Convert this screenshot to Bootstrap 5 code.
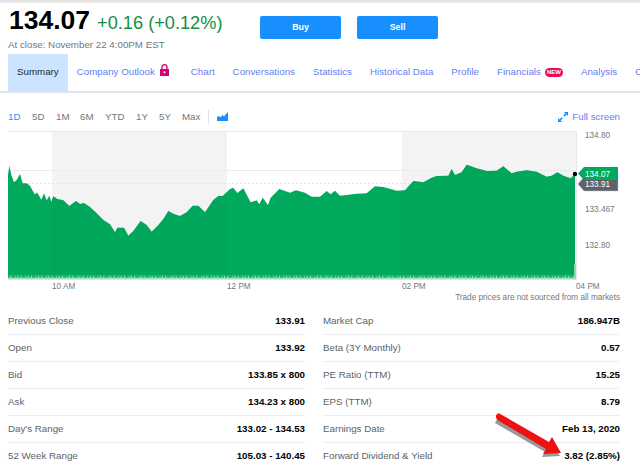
<!DOCTYPE html>
<html lang="en">
<head>
    <meta charset="UTF-8">
    <title>Stock Summary</title>
    <meta name="viewport" content="width=device-width, initial-scale=1">
    <link href="https://cdn.jsdelivr.net/npm/bootstrap@5.3.3/dist/css/bootstrap.min.css" rel="stylesheet">
    <style>
        html, body { height: 100%; }
        body {
            background: #fff;
            font-family: "Liberation Sans", Arial, sans-serif;
            font-size: 9.75px;
            overflow: hidden;
        }
        .page-wrap { width: 640px; height: 468px; overflow: hidden; position: relative; }
        .top-strip { height: 3px; background: linear-gradient(#dcdcdc, #f1f1f1); }
        .quote-head { height: 51px; padding-left: 9px; }
        .quote-left { width: 251px; }
        .price-line { line-height: 30px; margin-top: 2px; white-space: nowrap; }
        .price { font-size: 26.5px; font-weight: 700; color: #000; }
        .change { font-size: 18.2px; color: #109040; margin-left: 7px; }
        .close-note { font-size: 9.75px; line-height: 12px; margin-top: -2px; margin-left: -1px; color: #6f7880; }
        .trade-btn {
            width: 81px; height: 23px; margin-top: 13px; padding: 0;
            background: #188fff; border: 0; border-radius: 2px;
            color: #fff; font-size: 8.8px; font-weight: 700;
        }
        .tab-bar { height: 39px; padding-left: 8px; border-bottom: 2px solid #e0e4e9; white-space: nowrap; overflow: hidden; }
        .tab-item { height: 39px; padding: 0 9px; line-height: 36px; color: #5f80f5; flex: none; }
        .tab-item.active-tab { color: #26282a; background: #cce4ff; border-bottom: 2px solid #188fff; }
        .lock-icon { margin-left: 5px; vertical-align: -1px; }
        .new-pill {
            display: inline-block; margin-left: 4px; width: 18px; height: 9px;
            background: #ee0a5f; border-radius: 5px; color: #fff;
            font-size: 6px; font-weight: 700; line-height: 9px; text-align: center; vertical-align: 1px;
        }
        .range-bar { height: 32px; padding: 15px 20px 0 8px; font-size: 9.75px; color: #6f7880; }
        .range-item { line-height: 18px; }
        .range-on { color: #188fff; }
        .range-sep { width: 1px; height: 14px; background: #e0e4e9; margin: 2px 8px 0 0; }
        .full-link { color: #5f80f5; line-height: 18px; }
        .chart-svg { display: block; }
        .chart-svg text { font-family: "Liberation Sans", Arial, sans-serif; font-size: 8.2px; fill: #6f7880; }
        .chart-svg .tag-text { fill: #fff; }
        .stats-wrap { margin-top: 3px; padding-left: 8px; gap: 18px; }
        .stats-col { width: 297px; }
        .stat-row { height: 27px; border-bottom: 1px solid #eceef1; line-height: 26px; }
        .stat-row:last-child { border-bottom: 0; }
        .stat-label { color: #5b636a; }
        .stat-val { color: #000; font-weight: 700; }
        .red-arrow { position: absolute; left: 490px; top: 408px; }
    </style>
</head>
<body>
<div class="page-wrap">
    <div class="top-strip"></div>

    <div class="quote-head d-flex">
        <div class="quote-left">
            <div class="price-line"><span class="price">134.07</span><span class="change">+0.16 (+0.12%)</span></div>
            <div class="close-note">At close: November 22 4:00PM EST</div>
        </div>
        <button class="btn trade-btn me-3" type="button">Buy</button>
        <button class="btn trade-btn" type="button">Sell</button>
    </div>

    <div class="tab-bar d-flex">
        <div class="tab-item active-tab">Summary</div>
        <div class="tab-item">Company Outlook<svg class="lock-icon" width="9" height="12" viewBox="0 0 9 12"><path d="M2 5V3.2a2.5 2.5 0 0 1 5 0V5" fill="none" stroke="#d6006f" stroke-width="1.3"/><rect y="5" width="9" height="7" fill="#d6006f"/><circle cx="4.5" cy="8.3" r="1" fill="#fff"/></svg></div>
        <div class="tab-item ms-1">Chart</div>
        <div class="tab-item">Conversations</div>
        <div class="tab-item">Statistics</div>
        <div class="tab-item">Historical Data</div>
        <div class="tab-item">Profile</div>
        <div class="tab-item">Financials<span class="new-pill">NEW</span></div>
        <div class="tab-item">Analysis</div>
        <div class="tab-item">Options</div>
    </div>

    <div class="range-bar d-flex justify-content-between">
        <div class="d-flex">
            <span class="range-item range-on" style="width:24px">1D</span>
            <span class="range-item" style="width:24px">5D</span>
            <span class="range-item" style="width:24px">1M</span>
            <span class="range-item" style="width:25px">6M</span>
            <span class="range-item" style="width:31px">YTD</span>
            <span class="range-item" style="width:23px">1Y</span>
            <span class="range-item" style="width:23px">5Y</span>
            <span class="range-item" style="width:26px">Max</span>
            <span class="range-sep"></span>
            <svg class="mt-1" width="11" height="10" viewBox="0 0 11 10"><path d="M0 5 2 4 3.5 5.5 5.5 3 7 4.5 9 2 11 0V9H0Z" fill="#188fff"/></svg>
        </div>
        <div class="full-link d-flex align-items-center">
            <svg class="me-1" width="10" height="10" viewBox="0 0 10 10"><path d="M6 0h4v4L8.6 2.600 6.500 4.700 5.300 3.500 7.400 1.400ZM4 10H0V6l1.400 1.400 2.100-2.100 1.200 1.200L2.600 8.600Z" fill="#188fff"/></svg>
            Full screen
        </div>
    </div>

    <svg class="chart-svg" width="640" height="180" viewBox="0 0 640 180">
        <defs>
            <clipPath id="areaClip">
                <path id="areaShape" d="M24 150 28 122 34 150 42 172 50 165 60 147 68 175 80 175 90 182 104 208 112 203 124 224 132 205 140 226 148 212 154 230 160 214 172 222 190 226 208 243 228 228 240 237 252 234 270 246 290 265 310 285 330 298 345 322 352 308 372 308 385 332 400 318 422 288 440 300 455 320 475 300 490 282 505 258 520 266 540 273 560 262 578 242 595 242 615 262 640 225 655 213 668 213 690 192 700 188 712 204 730 190 752 232 770 226 778 238 788 218 804 240 812 218 838 192 855 198 870 203 888 196 915 203 935 215 960 215 980 198 992 208 1005 197 1020 212 1040 210 1070 206 1100 205 1125 184 1150 186 1190 197 1215 196 1240 168 1270 172 1295 158 1310 153 1345 152 1355 132 1365 150 1385 142 1400 119 1430 130 1460 138 1490 137 1510 124 1535 145 1550 140 1580 136 1610 140 1640 155 1655 152 1672 142 1690 152 1712 160 1725 148V462H24Z"/>
            </clipPath>
        </defs>
        <rect x="52" y="6" width="175" height="148" fill="#f3f3f4"/>
        <rect x="402" y="6" width="174" height="148" fill="#f3f3f4"/>
        <path d="M8 6.500H576.500V154" fill="none" stroke="#e4e6ec"/>
        <path d="M8 45.500H576" stroke="#ebecef"/>
        <path d="M8 58.500H576" stroke="#e2e4e8" stroke-dasharray="2 2"/>
        <g transform="scale(0.33333)">
            <use href="#areaShape" fill="#00a95c"/>
            <g clip-path="url(#areaClip)">
                <rect x="155" y="100" width="525" height="350" fill="#00a055" opacity=".35"/>
                <rect x="1205" y="100" width="520" height="350" fill="#00a055" opacity=".35"/>
            </g>
            <rect x="24" y="452" width="1701" height="10" fill="#a4dcc0"/>
            <path d="M24 455H1725" stroke="#00a95c" stroke-width="5" stroke-dasharray="7 3 11 2 5 3"/>
            <path d="M1725 418V462" stroke="#8fd6b3" stroke-width="6"/>
        </g>
        <path d="M8 154.500H576" stroke="#e0e2e8"/>

        <text x="585" y="13">134.80</text>
        <text x="585" y="87">133.467</text>
        <text x="585" y="123">132.80</text>
        <text x="52" y="164">10 AM</text>
        <text x="227" y="164">12 PM</text>
        <text x="402" y="164">02 PM</text>
        <text x="576" y="164">04 PM</text>
        <text x="620" y="175" text-anchor="end">Trade prices are not sourced from all markets</text>

        <path d="M584 52H618V66H584L578 59Z" fill="#5c636b" stroke="#bdbfc2" stroke-width=".5"/>
        <text class="tag-text" x="585" y="62">133.91</text>
        <path d="M584 42H618V55H584L578 48.500Z" fill="#00a95c"/>
        <text class="tag-text" x="585" y="51.500">134.07</text>
        <circle cx="575" cy="49" r="2.200" fill="#000"/>
    </svg>

    <div class="stats-wrap d-flex">
        <div class="stats-col">
            <div class="stat-row d-flex justify-content-between"><span class="stat-label">Previous Close</span><span class="stat-val">133.91</span></div>
            <div class="stat-row d-flex justify-content-between"><span class="stat-label">Open</span><span class="stat-val">133.92</span></div>
            <div class="stat-row d-flex justify-content-between"><span class="stat-label">Bid</span><span class="stat-val">133.85 x 800</span></div>
            <div class="stat-row d-flex justify-content-between"><span class="stat-label">Ask</span><span class="stat-val">134.23 x 800</span></div>
            <div class="stat-row d-flex justify-content-between"><span class="stat-label">Day's Range</span><span class="stat-val">133.02 - 134.53</span></div>
            <div class="stat-row d-flex justify-content-between"><span class="stat-label">52 Week Range</span><span class="stat-val">105.03 - 140.45</span></div>
        </div>
        <div class="stats-col">
            <div class="stat-row d-flex justify-content-between"><span class="stat-label">Market Cap</span><span class="stat-val">186.947B</span></div>
            <div class="stat-row d-flex justify-content-between"><span class="stat-label">Beta (3Y Monthly)</span><span class="stat-val">0.57</span></div>
            <div class="stat-row d-flex justify-content-between"><span class="stat-label">PE Ratio (TTM)</span><span class="stat-val">15.25</span></div>
            <div class="stat-row d-flex justify-content-between"><span class="stat-label">EPS (TTM)</span><span class="stat-val">8.79</span></div>
            <div class="stat-row d-flex justify-content-between"><span class="stat-label">Earnings Date</span><span class="stat-val">Feb 13, 2020</span></div>
            <div class="stat-row d-flex justify-content-between"><span class="stat-label">Forward Dividend &amp; Yield</span><span class="stat-val">3.82 (2.85%)</span></div>
        </div>
    </div>

    <!-- red arrow over the last row -->
    <svg class="red-arrow" width="80" height="56" viewBox="0 0 80 56">
        <path d="M8 9 59 36 62 31 71 46 53 47 56 42 6 13Z" fill="#555" opacity=".6" transform="translate(-1 2)"/>
        <path d="M7 6C9 5 10 6 12 7L59 34 62 29 71 45 53 46 56 41 9 13C6 11 5 8 7 6Z" fill="#ee1111"/>
    </svg>
</div>

<script src="https://cdn.jsdelivr.net/npm/bootstrap@5.3.3/dist/js/bootstrap.bundle.min.js"></script>
</body>
</html>
